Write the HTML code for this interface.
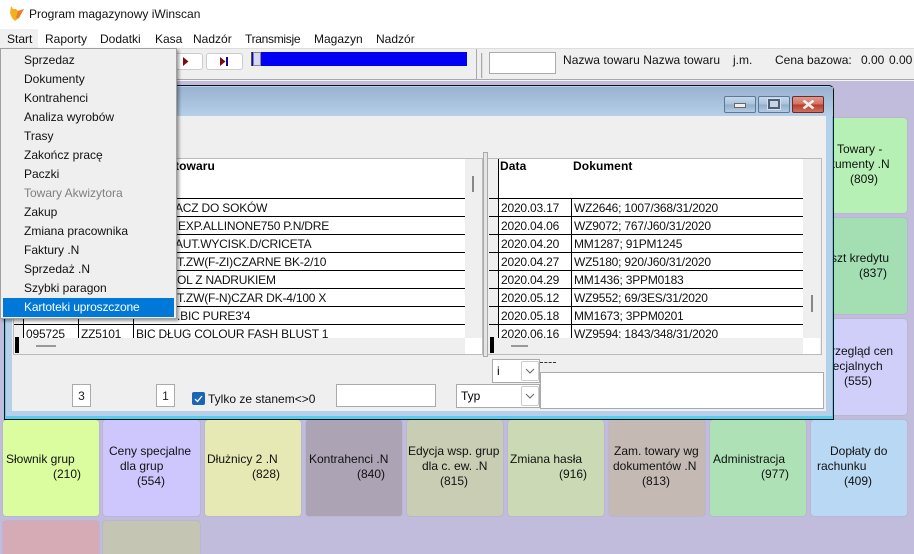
<!DOCTYPE html>
<html style="width:914px;height:554px;overflow:hidden"><head><meta charset="utf-8"><style>
html,body{margin:0;padding:0}
body{width:914px;height:554px;overflow:hidden;position:relative;background:#c1bcdc;font:12px "Liberation Sans","Noto Sans CJK JP",sans-serif;color:#000}
div,span{position:absolute;box-sizing:border-box;white-space:nowrap}
.m{top:31px;line-height:16px;color:#111}
.t{border-radius:3px;box-shadow:0 0 1px rgba(120,120,120,.6);line-height:15px;color:#111}
.t span{line-height:15px}
.i{left:24px;line-height:19px;color:#111;letter-spacing:0}
.h{height:1px;background:#000}
.v{width:1px;background:#000}
.c{font-size:12px;line-height:18px;color:#111;letter-spacing:-.2px}
.b{font-weight:bold;color:#000}
.wb{top:96px;width:32px;height:17px;border:1px solid #5d7895;border-radius:2px;background:linear-gradient(#c5d8ec 0,#a8c1dc 50%,#8fadc9 51%,#b4cbe3 100%)}
</style></head><body>

<div style="left:0;top:0;width:914px;height:48px;background:#fff"></div>
<svg style="position:absolute;left:8px;top:5px" width="18" height="17" viewBox="0 0 18 17"><path d="M3 1L5 4 8 4 10 6 16 4 13 9 11 13 7 16 4 13 2 8Z" fill="#f2b01f"/><path d="M10 6L16 4 13 9 11 13 8 13Z" fill="#f07a2a"/></svg>
<div style="left:29px;top:6px;line-height:16px;color:#111">Program magazynowy iWinscan</div>

<div style="left:0;top:29px;width:38px;height:20px;background:#f0f0f0"></div>
<div class="m" style="left:7px">Start</div>
<div class="m" style="left:45px">Raporty</div>
<div class="m" style="left:100px">Dodatki</div>
<div class="m" style="left:155px">Kasa</div>
<div class="m" style="left:193px">Nadzór</div>
<div class="m" style="left:245px;letter-spacing:-.3px">Transmisje</div>
<div class="m" style="left:314px">Magazyn</div>
<div class="m" style="left:376px">Nadzór</div>

<!-- toolbar -->
<div style="left:0;top:48px;width:914px;height:31px;background:#efefef;border-top:1px solid #ddd"></div>
<div style="left:0;top:79px;width:914px;height:1px;background:#a8a8a8"></div>
<div style="left:0;top:80px;width:914px;height:1px;background:#f4f4f4"></div>
<div style="left:160px;top:53px;width:43px;height:17px;background:#fff;border:1px solid #ccc;border-radius:3px"></div>
<div style="left:206px;top:53px;width:37px;height:17px;background:#fff;border:1px solid #ccc;border-radius:3px"></div>
<svg style="position:absolute;left:180px;top:56px" width="60" height="12"><path d="M3 1L8.5 5.5 3 10Z M40 1L45.5 5.5 40 10Z" fill="#7a0c0c"/><rect x="46" y="1" width="2" height="9" fill="#0a0a9c"/></svg>
<div style="left:251px;top:52px;width:216px;height:14px;background:#0000f5;border-left:1px solid #555"></div>
<div style="left:253px;top:52px;width:8px;height:14px;background:#d8d8e8;border:1px solid #888"></div>
<div style="left:476px;top:49px;width:1px;height:30px;background:#aaa"></div>
<div style="left:481px;top:53px;width:2px;height:25px;background:#ddd;border-left:1px solid #aaa"></div>
<div style="left:489px;top:52px;width:67px;height:22px;background:#fff;border:1px solid #aaa"></div>
<div style="left:563px;top:52px;line-height:16px;color:#111;letter-spacing:.07px">Nazwa towaru Nazwa towaru</div>
<div style="left:733px;top:52px;line-height:16px;color:#111">j.m.</div>
<div style="left:775px;top:52px;line-height:16px;color:#111">Cena bazowa:</div>
<div style="left:861px;top:52px;line-height:16px;color:#111">0.00</div>
<div style="left:889px;top:52px;line-height:16px;color:#111">0.00</div>

<!-- tiles right -->
<div class="t" style="left:832px;top:118px;width:75px;height:95px;background:#b6f0b4"><span style="left:5px;top:24px">Towary -</span><span style="left:-3px;top:39px">kumenty .N</span><span style="left:18px;top:54px">(809)</span></div>
<div class="t" style="left:832px;top:218px;width:75px;height:96px;background:#a3dfb3"><span style="left:-1px;top:33px">szt kredytu</span><span style="left:27px;top:48px">(837)</span></div>
<div class="t" style="left:832px;top:319px;width:75px;height:96px;background:#cfcffa"><span style="left:-1px;top:25px">rzegląd cen</span><span style="left:-6px;top:40px">pecjalnych</span><span style="left:12px;top:55px">(555)</span></div>

<!-- tiles bottom -->
<div class="t" style="left:3px;top:420px;width:96px;height:96px;background:#dbfd9f"><span style="left:3px;top:32px">Słownik grup</span><span style="left:50px;top:47px">(210)</span></div>
<div class="t" style="left:103px;top:420px;width:97px;height:96px;background:#cec7fd"><span style="left:6px;top:24px">Ceny specjalne</span><span style="left:17px;top:39px">dla grup</span><span style="left:34px;top:54px">(554)</span></div>
<div class="t" style="left:205px;top:420px;width:96px;height:96px;background:#e6e9b3"><span style="left:2px;top:32px">Dłużnicy 2 .N</span><span style="left:47px;top:47px">(828)</span></div>
<div class="t" style="left:306px;top:420px;width:96px;height:96px;background:#aca3b5"><span style="left:3px;top:32px">Kontrahenci .N</span><span style="left:51px;top:47px">(840)</span></div>
<div class="t" style="left:407px;top:420px;width:96px;height:96px;background:#c9cdb3"><span style="left:1px;top:24px">Edycja wsp. grup</span><span style="left:15px;top:39px">dla c. ew. .N</span><span style="left:33px;top:54px">(815)</span></div>
<div class="t" style="left:508px;top:420px;width:96px;height:96px;background:#cbdab5"><span style="left:2px;top:32px">Zmiana hasła</span><span style="left:51px;top:47px">(916)</span></div>
<div class="t" style="left:609px;top:420px;width:96px;height:96px;background:#c4bab3"><span style="left:5px;top:24px">Zam. towary wg</span><span style="left:4px;top:39px">dokumentów .N</span><span style="left:33px;top:54px">(813)</span></div>
<div class="t" style="left:710px;top:420px;width:96px;height:96px;background:#aee2b6"><span style="left:3px;top:32px">Administracja</span><span style="left:51px;top:47px">(977)</span></div>
<div class="t" style="left:811px;top:420px;width:96px;height:96px;background:#b8d8f3"><span style="left:19px;top:24px">Dopłaty do</span><span style="left:6px;top:39px">rachunku</span><span style="left:33px;top:54px">(409)</span></div>
<div class="t" style="left:3px;top:521px;width:96px;height:33px;background:#d6abb5;border-radius:3px 3px 0 0"></div>
<div class="t" style="left:103px;top:521px;width:97px;height:33px;background:#c5c5b3;border-radius:3px 3px 0 0"></div>

<!-- window -->
<div style="left:4px;top:85px;width:830px;height:335px;background:#b6d0ea;border:1px solid #111;border-top-right-radius:5px;border-top-left-radius:5px;box-shadow:inset 0 -3px 0 #54cdef,inset -1px 0 0 #54cdef,inset 1px 0 0 #54cdef"></div>
<div style="left:5px;top:87px;width:828px;height:29px;background:linear-gradient(#98b2d0,#b6cfe9)"></div>
<div style="left:12px;top:116px;width:814px;height:295px;background:#efefef"></div>
<div class="wb" style="left:724px"><div style="left:9px;top:6px;width:12px;height:5px;background:#eee;border:1px solid #666"></div></div>
<div class="wb" style="left:758px"><div style="left:9px;top:2px;width:12px;height:10px;background:#c4d5e8;border:2px solid #4d6076;box-shadow:0 0 0 1px #dde"></div></div>
<div class="wb" style="left:792px;border-color:#6d2a2a;background:linear-gradient(#e09a90 0,#d0705f 50%,#b83a28 51%,#d07060 100%)"><svg style="position:absolute;left:9px;top:3px" width="13" height="9"><path d="M1.5 .5L11.5 8.5M11.5 .5L1.5 8.5" stroke="#eee" stroke-width="2.6"/></svg></div>

<!-- left grid -->
<div style="left:13px;top:158px;width:470px;height:197px;background:#efefef;border:1px solid #bbb"></div>
<div style="left:23px;top:159px;width:442px;height:179px;background:#fff"></div>
<div style="left:14px;top:159px;width:9px;height:39px;background:#efefef"></div>
<div class="c b" style="left:175px;top:157px;letter-spacing:.1px">towaru</div>
<div class="h" style="left:14px;top:198px;width:451px"></div>
<div class="h" style="left:14px;top:216px;width:451px"></div>
<div class="h" style="left:14px;top:234px;width:451px"></div>
<div class="h" style="left:14px;top:252px;width:451px"></div>
<div class="h" style="left:14px;top:270px;width:451px"></div>
<div class="h" style="left:14px;top:288px;width:451px"></div>
<div class="h" style="left:14px;top:306px;width:451px"></div>
<div class="h" style="left:14px;top:324px;width:451px"></div>
<div class="v" style="left:23px;top:198px;height:140px"></div>
<div class="v" style="left:78px;top:198px;height:140px"></div>
<div class="v" style="left:133px;top:198px;height:140px"></div>
<div class="c" style="left:175px;top:199px">ACZ DO SOKÓW</div>
<div class="c" style="left:178px;top:217px">EXP.ALLINONE750 P.N/DRE</div>
<div class="c" style="left:175px;top:235px">AUT.WYCISK.D/CRICETA</div>
<div class="c" style="left:177px;top:253px">T.ZW(F-ZI)CZARNE BK-2/10</div>
<div class="c" style="left:177px;top:271px">OL Z NADRUKIEM</div>
<div class="c" style="left:177px;top:289px">T.ZW(F-N)CZAR DK-4/100 X</div>
<div class="c" style="left:177px;top:307px">.BIC PURE3'4</div>
<div style="left:14px;top:325px;width:451px;height:13px;overflow:hidden">
<div class="c" style="left:12px;top:0">095725</div><div class="c" style="left:67px;top:0">ZZ5101</div><div class="c" style="left:122px;top:0">BIC DŁUG COLOUR FASH BLUST 1</div>
<div class="v" style="left:9px;top:0;height:13px"></div><div class="v" style="left:64px;top:0;height:13px"></div><div class="v" style="left:119px;top:0;height:13px"></div></div>
<div style="left:15px;top:337px;width:4px;height:16px;background:#000"></div>
<div style="left:36px;top:345px;width:20px;height:2px;background:#999"></div>
<div style="left:472px;top:176px;width:2px;height:16px;background:#888"></div>
<div style="left:465px;top:338px;width:17px;height:16px;background:#fff"></div>

<!-- splitter -->
<div style="left:483px;top:152px;width:5px;height:205px;background:#e4e4e4;border:1px solid #aaa"></div>

<!-- right grid -->
<div style="left:488px;top:158px;width:334px;height:197px;background:#efefef;border:1px solid #bbb;border-left:0"></div>
<div style="left:499px;top:159px;width:304px;height:179px;background:#fff"></div>
<div class="c b" style="left:500px;top:157px;letter-spacing:.1px">Data</div>
<div class="c b" style="left:573px;top:157px;letter-spacing:.1px">Dokument</div>
<div class="h" style="left:489px;top:198px;width:314px"></div>
<div class="h" style="left:489px;top:216px;width:314px"></div>
<div class="h" style="left:489px;top:234px;width:314px"></div>
<div class="h" style="left:489px;top:252px;width:314px"></div>
<div class="h" style="left:489px;top:270px;width:314px"></div>
<div class="h" style="left:489px;top:288px;width:314px"></div>
<div class="h" style="left:489px;top:306px;width:314px"></div>
<div class="h" style="left:489px;top:324px;width:314px"></div>
<div class="v" style="left:498px;top:159px;height:179px"></div>
<div class="v" style="left:571px;top:198px;height:140px"></div>
<div class="c" style="left:501px;top:199px">2020.03.17</div><div class="c" style="left:574px;top:199px">WZ2646; 1007/368/31/2020</div>
<div class="c" style="left:501px;top:217px">2020.04.06</div><div class="c" style="left:574px;top:217px">WZ9072; 767/J60/31/2020</div>
<div class="c" style="left:501px;top:235px">2020.04.20</div><div class="c" style="left:574px;top:235px">MM1287; 91PM1245</div>
<div class="c" style="left:501px;top:253px">2020.04.27</div><div class="c" style="left:574px;top:253px">WZ5180; 920/J60/31/2020</div>
<div class="c" style="left:501px;top:271px">2020.04.29</div><div class="c" style="left:574px;top:271px">MM1436; 3PPM0183</div>
<div class="c" style="left:501px;top:289px">2020.05.12</div><div class="c" style="left:574px;top:289px">WZ9552; 69/3ES/31/2020</div>
<div class="c" style="left:501px;top:307px">2020.05.18</div><div class="c" style="left:574px;top:307px">MM1673; 3PPM0201</div>
<div style="left:489px;top:325px;width:314px;height:13px;overflow:hidden">
<div class="c" style="left:12px;top:0">2020.06.16</div><div class="c" style="left:85px;top:0">WZ9594; 1843/348/31/2020</div>
<div class="v" style="left:9px;top:0;height:13px"></div><div class="v" style="left:82px;top:0;height:13px"></div></div>
<div style="left:490px;top:337px;width:4px;height:16px;background:#000"></div>
<div style="left:511px;top:345px;width:17px;height:2px;background:#999"></div>
<div style="left:811px;top:295px;width:2px;height:17px;background:#888"></div>
<div style="left:803px;top:338px;width:17px;height:16px;background:#fff"></div>

<!-- bottom controls -->
<div style="left:72px;top:384px;width:19px;height:23px;background:#fff;border:1px solid #aaa;text-align:center;line-height:22px;color:#222">3</div>
<div style="left:156px;top:384px;width:19px;height:23px;background:#fff;border:1px solid #aaa;text-align:center;line-height:22px;color:#222">1</div>
<div style="left:192px;top:392px;width:13px;height:13px;background:#1a66b5;border-radius:2px"></div>
<svg style="position:absolute;left:192px;top:392px" width="13" height="13"><path d="M3 7L5.5 9.5 10 4" fill="none" stroke="#fff" stroke-width="1.3"/></svg>
<div style="left:208px;top:391px;line-height:16px;color:#111">Tylko ze stanem&lt;&gt;0</div>
<div style="left:336px;top:384px;width:100px;height:23px;background:#fff;border:1px solid #aaa"></div>
<div style="left:492px;top:359px;width:48px;height:24px;background:#fff;border:1px solid #aaa"><span style="left:4px;top:3px;line-height:16px">i</span><div style="left:28px;top:1px;width:18px;height:20px;border:1px solid #ccc;background:#fff;border-radius:2px"><svg style="position:absolute;left:3px;top:6px" width="11" height="6"><path d="M1 1L5 5 9 1" fill="none" stroke="#666"/></svg></div></div>
<div style="left:456px;top:384px;width:84px;height:24px;background:#fff;border:1px solid #aaa"><span style="left:4px;top:3px;line-height:16px">Typ</span><div style="left:64px;top:1px;width:18px;height:20px;border:1px solid #ccc;background:#fff;border-radius:2px"><svg style="position:absolute;left:3px;top:6px" width="11" height="6"><path d="M1 1L5 5 9 1" fill="none" stroke="#666"/></svg></div></div>
<div style="left:540px;top:372px;width:284px;height:37px;background:#fff;border:1px solid #aaa"></div>
<div style="left:540px;top:362px;width:16px;height:1px;border-top:1px dashed #333"></div>

<!-- dropdown menu -->
<div style="left:0;top:48px;width:177px;height:271px;background:#efefef;border:1px solid #a0a0a0;box-shadow:2px 2px 3px rgba(0,0,0,.4)"></div>
<div style="left:3px;top:298px;width:171px;height:19px;background:#0078d7"></div>
<div class="i" style="top:51px">Sprzedaz</div>
<div class="i" style="top:70px">Dokumenty</div>
<div class="i" style="top:89px">Kontrahenci</div>
<div class="i" style="top:108px">Analiza wyrobów</div>
<div class="i" style="top:127px">Trasy</div>
<div class="i" style="top:146px">Zakończ pracę</div>
<div class="i" style="top:165px">Paczki</div>
<div class="i" style="top:184px;color:#808080">Towary Akwizytora</div>
<div class="i" style="top:203px">Zakup</div>
<div class="i" style="top:222px">Zmiana pracownika</div>
<div class="i" style="top:241px">Faktury .N</div>
<div class="i" style="top:260px">Sprzedaż .N</div>
<div class="i" style="top:279px">Szybki paragon</div>
<div class="i" style="top:298px;color:#fff;letter-spacing:-.15px">Kartoteki uproszczone</div>
</body></html>
